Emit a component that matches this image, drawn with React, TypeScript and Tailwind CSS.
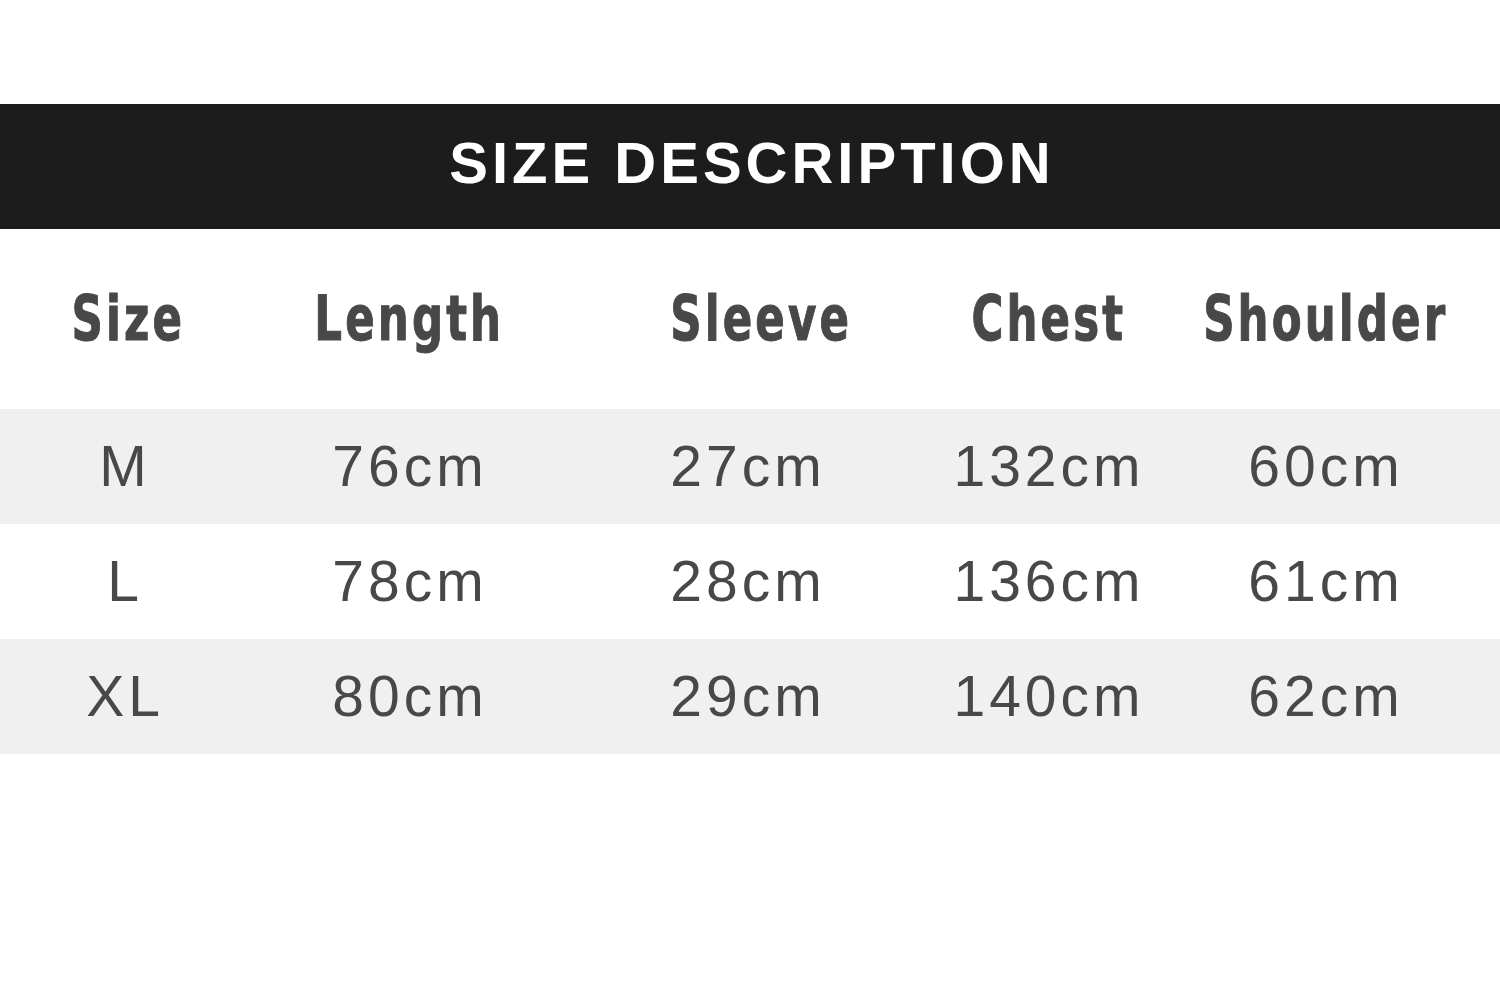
import React from 'react';

const columns = ['Size', 'Length', 'Sleeve', 'Chest', 'Shoulder'];

const rows = [
  { size: 'M', length: '76cm', sleeve: '27cm', chest: '132cm', shoulder: '60cm' },
  { size: 'L', length: '78cm', sleeve: '28cm', chest: '136cm', shoulder: '61cm' },
  { size: 'XL', length: '80cm', sleeve: '29cm', chest: '140cm', shoulder: '62cm' },
];

const gridCols = 'grid grid-cols-[246px_324px_364px_226px_328px]';

export default function App() {
  return (
    <div className="w-[1500px] h-[1000px] bg-white font-['Liberation_Sans',Arial,sans-serif]">
      <div className="pt-[104px]">
        <div className="h-[125px] bg-[#1c1c1c] flex items-center justify-center pb-2">
          <h1 className="text-white text-[58px] font-bold tracking-[4px] leading-none pl-[4px]">
            SIZE DESCRIPTION
          </h1>
        </div>

        <div className={`${gridCols} h-[180px] items-center`}>
          {columns.map((col, i) => (
            <div key={col} className={`flex justify-center ${i === 2 ? 'pl-4' : ''} ${i === 0 ? 'pl-2' : ''}`}>
              <span className="inline-block scale-x-[0.78] not-italic font-stretch-condensed text-[#484848] text-[62px] font-bold leading-none tracking-[4px] pl-[4px] [-webkit-text-stroke:1px_#484848] font-['DejaVu_Sans',sans-serif]">
                {col}
              </span>
            </div>
          ))}
        </div>

        {rows.map((row, i) => (
          <div
            key={row.size}
            className={`${gridCols} h-[115px] items-center ${i % 2 === 0 ? 'bg-[#f0f0f0]' : 'bg-white'}`}
          >
            {[row.size, row.length, row.sleeve, row.chest, row.shoulder].map((v, j) => (
              <div
                key={j}
                className={`text-center text-[#484848] text-[57px] leading-none tracking-[4px] pl-[4px] ${j === 2 ? 'pr-3' : ''} ${j === 3 ? 'pl-3' : ''}`}
              >
                {v}
              </div>
            ))}
          </div>
        ))}
      </div>
    </div>
  );
}
